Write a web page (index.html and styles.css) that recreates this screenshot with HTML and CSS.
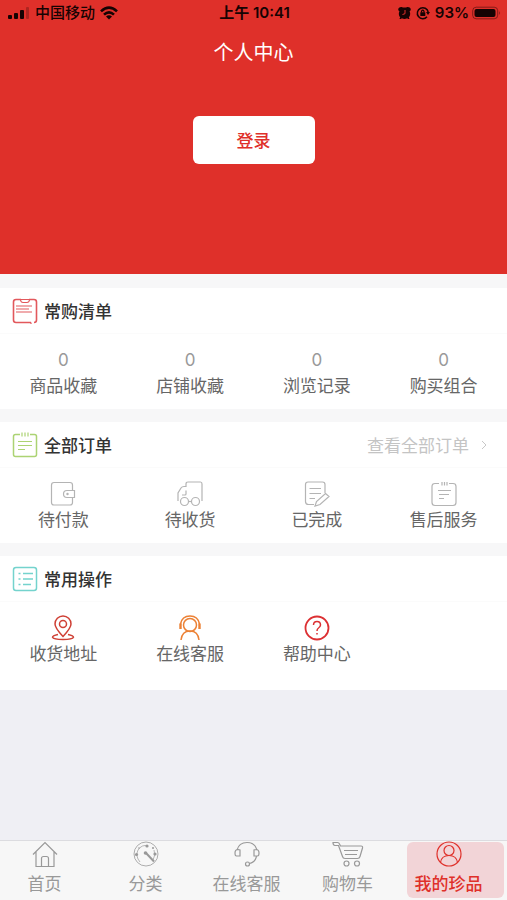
FILE: index.html
```html
<!DOCTYPE html>
<html lang="zh-CN">
<head>
<meta charset="utf-8">
<meta name="viewport" content="width=device-width, initial-scale=1">
<title>个人中心</title>
<link rel="stylesheet" href="styles.css">
</head>
<body>
<header class="hero">
  <div class="status">
    <div class="status-side">
      <svg class="signal" width="22" height="14" viewBox="0 0 22 14"><rect x="0" y="9" width="4" height="4" rx="1"/><rect x="6" y="7" width="4" height="6" rx="1"/><rect x="12" y="4" width="4" height="9" rx="1"/><rect x="18" y="1" width="3" height="12" rx="1" opacity=".25"/></svg>
      <span>中国移动</span>
      <svg class="wifi" width="18" height="14" viewBox="0 0 18 14" fill="none" stroke="currentColor" stroke-width="2.6"><path d="M1 5.4Q9-2 17 5.4M4 8.6Q9 4 14 8.6"/><path d="M9 13.5 6 10.5Q9 8.2 12 10.5Z" fill="currentColor" stroke="none"/></svg>
    </div>
    <time>上午 10:41</time>
    <div class="status-side status-end">
      <svg class="alarm" width="13" height="14" viewBox="0 0 13 14"><path d="M.3 4.2Q-.2.8 3.6.9L5 1.6H8L9.4.9Q13.200.8 12.700 4.200L11.600 5.200Q13.100 9 10.800 11.400L11.600 13H10L9.200 12.300Q6.500 13.500 3.800 12.300L3 13H1.400L2.200 11.400Q-.1 9 1.400 5.200Z"/><path d="M7 4V7.700L4.500 8.500" fill="none" stroke="#df302a"/></svg>
      <svg class="lock" width="14" height="14" viewBox="0 0 14 14" fill="none" stroke="currentColor" stroke-width="1.5"><path d="M11 10.800A5.500 5.500 0 1 1 12.200 6"/><path d="M10 6H14L12 9Z" fill="currentColor" stroke="none"/><path d="M5.500 6.500V5.300Q6.700 3 8 5.300V6.500" stroke-width="1.200"/><rect x="4.300" y="6.200" width="5" height="3.800" rx=".6" fill="currentColor" stroke="none"/></svg>
      <span>93%</span>
      <svg class="battery" width="29" height="14" viewBox="0 0 29 14"><rect x=".7" y="1.200" width="25" height="11.600" rx="3.500" fill="none" stroke="currentColor" opacity=".45"/><rect x="2.500" y="3" width="21" height="8" rx="2"/><path d="M27.200 5Q29 7 27.200 9Z" opacity=".5"/></svg>
    </div>
  </div>
  <h1>个人中心</h1>
  <button class="login" type="button">登录</button>
</header>

<main>
  <section class="panel">
    <div class="panel-head">
      <svg class="icon red" viewBox="0 0 26 26"><path d="M9 1.500H4Q1.500 1.500 1.500 4V22Q1.500 24.500 4 24.500H19M22 24.500Q24.500 24.500 24.500 22V4Q24.500 1.500 22 1.500H17" stroke-width="1.600"/><path d="M7.500 1.500H18.500M8.500 2Q9 4.500 11 4.500H15Q17 4.500 17.500 2M4 8H20M4 11H17M4 14H20M19 24.500V26"/></svg>
      <h2>常购清单</h2>
    </div>
    <ul class="grid">
      <li><a href="#"><span class="count">0</span>商品收藏</a></li>
      <li><a href="#"><span class="count">0</span>店铺收藏</a></li>
      <li><a href="#"><span class="count">0</span>浏览记录</a></li>
      <li><a href="#"><span class="count">0</span>购买组合</a></li>
    </ul>
  </section>

  <section class="panel">
    <div class="panel-head">
      <svg class="icon green" viewBox="0 0 26 26"><path d="M8 2.500H3.500Q1.500 2.500 1.500 4.500V22.500Q1.500 24.500 3.500 24.500H22.500Q24.500 24.500 24.500 22.500V4.500Q24.500 2.500 22.500 2.500H18" stroke-width="1.500"/><path d="M10 .5V4.500M13 .5V4.500M16 .5V4.500M6 9.500H20M6 13.500H20M6 17.500H13"/></svg>
      <h2>全部订单</h2>
      <a class="more" href="#">查看全部订单<svg width="6" height="10" viewBox="0 0 6 10"><path d="M1 1 5 5 1 9"/></svg></a>
    </div>
    <ul class="grid">
      <li><a href="#"><svg class="icon" viewBox="0 0 26 26"><path d="M22.500 9.500V4Q22.500 1.500 20 1.500H4Q1.500 1.500 1.500 4V21.500Q1.500 24 4 24H20Q22.500 24 22.500 21.500V16.500M24.500 9.500H17Q13.500 9.500 13.500 13T17 16.500H24.500Z"/><circle cx="17.500" cy="13" r=".6"/></svg>待付款</a></li>
      <li><a href="#"><svg class="icon" viewBox="0 0 26 26"><path d="M1 20V12L4 7Q5 5.500 7 5.500H9V3Q9 1 11 1H23.500Q25 1 25 3V20M9 9.500V13Q9 14 8 14H5"/><circle cx="7.500" cy="20.500" r="4"/><circle cx="18.500" cy="20.500" r="4"/><path d="M11.500 20.500H14.500"/></svg>待收货</a></li>
      <li><a href="#"><svg class="icon" viewBox="0 0 26 26"><path d="M10 23.500H4.500Q1.500 23.500 1.500 20.500V3.500Q1.500 1 4 1H18.500Q21 1 21 3.500V12M5.500 7.500H17M5.500 12.500H17M5.500 17.500H11M21.500 12.500 25 15.500 16 23.500 11 25 12.500 20.500Z"/></svg>已完成</a></li>
      <li><a href="#"><svg class="icon" viewBox="0 0 26 26"><path d="M8 2.500H4Q1 2.500 1 5.500V21.500Q1 24.500 4 24.500H22Q25 24.500 25 21.500V5.500Q25 2.500 22 2.500H18M11 1V4.500M13.500 1V4.500M16 1V4.500M7 9.500H20M8 13.500H18M8 17.500H13"/></svg>售后服务</a></li>
    </ul>
  </section>

  <section class="panel">
    <div class="panel-head">
      <svg class="icon teal" viewBox="0 0 26 26"><rect x="1.500" y="1.500" width="23" height="23" rx="2.500" stroke-width="1.500"/><path d="M11 7.500H21M11 13H21M11 18.500H19M6.500 7.500H8.500M6.500 13H8.500M6.500 18.500H8.500" stroke-width="1.500"/></svg>
      <h2>常用操作</h2>
    </div>
    <ul class="grid">
      <li><a href="#"><svg class="icon brick" viewBox="0 0 26 26"><path d="M13 21.500Q5 13 5 9A8 8 0 0 1 21 9Q21 13 13 21.500Z"/><circle cx="13" cy="9" r="3.500"/><path d="M8 19.500Q2.500 20.500 2.500 22.300Q3.500 24.500 13 24.500T23.500 22.300Q23.500 20.500 18 19.500"/></svg>收货地址</a></li>
      <li><a href="#"><svg class="icon orange" viewBox="0 0 26 26"><circle cx="13" cy="10" r="6.500"/><path d="M3.500 9Q5 1 13 1T22.500 9M4 25Q5 16 13 16T22 25"/><path d="M3.500 8.500V14M22.500 8.500V14" stroke-width="2.400"/></svg>在线客服</a></li>
      <li><a href="#"><svg class="icon crimson" viewBox="0 0 26 26"><circle cx="13" cy="13" r="11.500" stroke-width="1.800"/><path d="M9.500 10Q9.500 6.500 13 6.500T16.500 10Q16.500 11.500 14.500 13Q13 14 13 16M13 18V19.500"/></svg>帮助中心</a></li>
    </ul>
  </section>
</main>

<nav class="tabs">
  <a href="#"><svg class="icon" viewBox="0 0 26 26"><path d="M1 13.500 13 1.500 25 13.500M4 11V25.500H22V11M9.500 25V17.500Q9.500 15.500 11.500 15.500H14.500Q16.500 15.500 16.500 17.500V25"/></svg>首页</a>
  <a href="#"><svg class="icon" viewBox="0 0 26 26"><circle cx="13" cy="13" r="12" stroke-width=".8"/><path d="M7 21Q2 15 5 9Q9 3 15 5M21 9Q23 14 20 19" stroke-width=".7"/><path d="M13 12 21 20.500" stroke-width="2"/><g fill="currentColor" stroke="none"><circle cx="12.500" cy="12" r="1.800"/><circle cx="14" cy="5" r="1.600"/><circle cx="3.500" cy="13.500" r="1.600"/><circle cx="22" cy="13" r="1.600"/><circle cx="20" cy="7" r="1"/><circle cx="6" cy="7" r=".8"/></g></svg>分类</a>
  <a href="#"><svg class="icon" viewBox="0 0 26 26"><path d="M3 9Q5 1.500 13 1.500T23 9M6 9V15H2.500Q1 15 1 12Q1 8.500 4 8.500ZM20 9V15H23.500Q25 15 25 12Q25 8.500 22 8.500ZM22.500 15.500Q21 21.500 15.500 22.500"/><circle cx="13.500" cy="23" r="2"/></svg>在线客服</a>
  <a href="#"><svg class="icon cart" viewBox="0 0 32 26"><path d="M1 1.500H5.500Q7 1.500 7.500 3L8.500 5H29Q31 5 30.500 7L28 15.500Q27.500 17.500 25.500 17.500H13Q11 17.500 10.500 15.500L6.500 4.500H3Q1 4.500 1 1.500ZM12 9.500H26M13 13.500H25"/><circle cx="14.500" cy="22.500" r="2.500"/><circle cx="25" cy="22.500" r="2.500"/></svg>购物车</a>
  <a class="active" href="#" aria-current="page"><svg class="icon" viewBox="0 0 26 26"><circle cx="13" cy="13" r="12"/><circle cx="13" cy="9.500" r="5"/><path d="M4.500 21.500Q5.500 14.500 13 14.500T21.500 21.500"/></svg>我的珍品</a>
</nav>
</body>
</html>
```

FILE: styles.css
```css
* {
  box-sizing: border-box;
}

body {
  margin: 0;
  min-height: 100vh;
  display: flex;
  flex-direction: column;
  background: #efeff4;
  color: #666;
  font: 17px/24px "Noto Sans CJK SC", sans-serif;
}

a {
  color: inherit;
  text-decoration: none;
}

h1,
h2,
ul {
  margin: 0;
  padding: 0;
}

.hero {
  display: flex;
  flex-direction: column;
  align-items: center;
  padding-bottom: 110px;
  background: #df302a;
}

.status {
  align-self: stretch;
  display: grid;
  grid-template-columns: 1fr auto 1fr;
  align-items: center;
  height: 26px;
  padding: 0 6px 0 8px;
  color: #160303;
  font: 500 15px/24px Inter, "Noto Sans CJK SC", sans-serif;
}

.status svg {
  fill: currentColor;
}

.status .wifi,
.status .lock {
  fill: none;
}

.status time,
.status-end span {
  font-weight: 600;
}

.status-side {
  display: flex;
  align-items: center;
  gap: 5px;
}

.status-end {
  justify-content: flex-end;
}

.status-end .battery {
  margin-left: -2px;
}

.hero h1 {
  margin-top: 12px;
  color: #fff;
  font-size: 20px;
  font-weight: 400;
  line-height: 28px;
}

.login {
  width: 122px;
  height: 48px;
  margin-top: 50px;
  padding: 0;
  border: 0;
  border-radius: 6px;
  background: #fff;
  color: #df302a;
  font: 500 17px/24px "Noto Sans CJK SC", sans-serif;
}

main {
  display: grid;
  gap: 13px;
  padding-top: 14px;
  background: #f7f7f8;
}

.panel {
  background: #fff;
}

.panel:last-child {
  padding-bottom: 13px;
}

.panel-head {
  display: flex;
  align-items: center;
  gap: 6px;
  height: 46px;
  padding: 0 20px 0 12px;
  border-bottom: 1px solid #fbfbfb;
}

.panel-head h2 {
  color: #333;
  font-size: 17px;
  font-weight: 500;
}

.more {
  display: flex;
  align-items: center;
  gap: 12px;
  margin-left: auto;
  color: #c4c4c4;
}

.more svg {
  fill: none;
  stroke: #c8c8c8;
}

.icon {
  display: block;
  width: 26px;
  height: 26px;
  fill: none;
  stroke: currentColor;
  stroke-width: 1.2;
}

.red { color: #e2585c; }
.green { color: #acd373; }
.teal { color: #74d3cd; }

.grid {
  display: grid;
  grid-template-columns: repeat(4, 1fr);
  height: 75px;
  padding-top: 13px;
  list-style: none;
}

.grid a {
  display: flex;
  flex-direction: column;
  align-items: center;
}

.grid .icon {
  color: #b4b4b4;
}

.grid .brick,
.grid .orange,
.grid .crimson {
  stroke-width: 1.5;
}

.grid .brick { color: #cf4035; }
.grid .orange { color: #ec8135; }
.grid .crimson { color: #dc3033; }

.count {
  height: 26px;
  color: #999;
  font-family: Inter, sans-serif;
  line-height: 26px;
}

.tabs {
  display: grid;
  grid-template-columns: repeat(5, 1fr);
  height: 60px;
  margin-top: auto;
  padding: 1px 1px 2px;
  border-top: 1px solid #dcdce0;
  background: #f7f7f7;
  color: #999;
}

.tabs a {
  display: flex;
  flex-direction: column;
  align-items: center;
  gap: 4px;
  margin: 0 2px;
  padding-right: 14px;
  border-radius: 6px;
  white-space: nowrap;
}

.tabs .icon {
  flex: none;
  margin-top: -1px;
}

.tabs .cart {
  width: 32px;
}

.tabs .active {
  background: #f2d4d7;
  color: #df302a;
  font-weight: 500;
}
```
